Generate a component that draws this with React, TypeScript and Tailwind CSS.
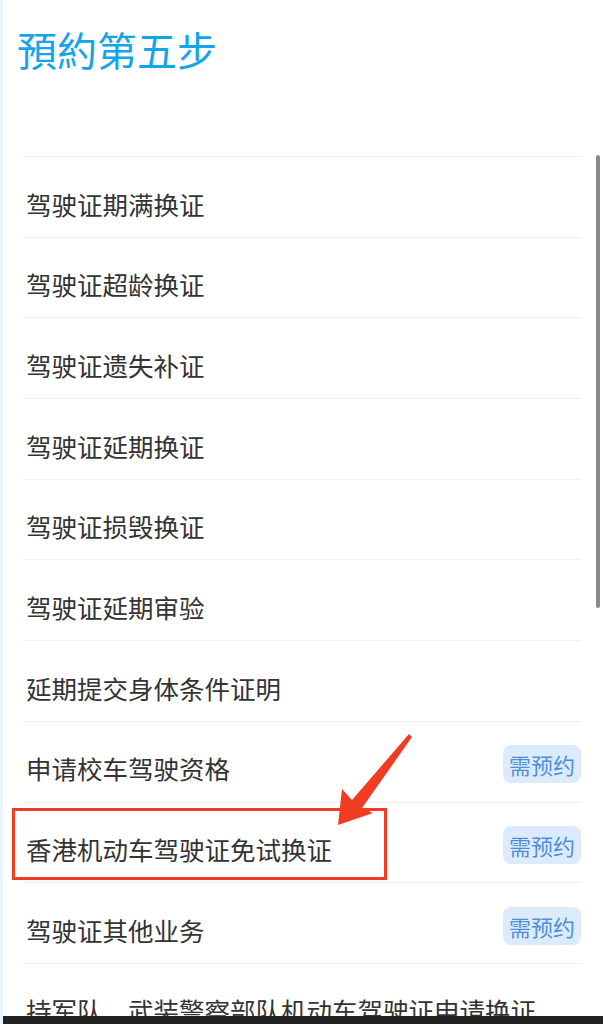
import React from "react";

const items: { label: string; booking?: boolean }[] = [
  { label: "驾驶证期满换证" },
  { label: "驾驶证超龄换证" },
  { label: "驾驶证遗失补证" },
  { label: "驾驶证延期换证" },
  { label: "驾驶证损毁换证" },
  { label: "驾驶证延期审验" },
  { label: "延期提交身体条件证明" },
  { label: "申请校车驾驶资格", booking: true },
  { label: "香港机动车驾驶证免试换证", booking: true },
  { label: "驾驶证其他业务", booking: true },
];

const Row = ({ label, booking }: { label: string; booking?: boolean }) => (
  <div className="flex h-[80.7px] items-center justify-between border-t border-[#eeeeee] pt-[13px]">
    <span className="pl-[3px] text-[25.5px] leading-none text-[#333333]">{label}</span>
    {booking && (
      <span className="mb-2 flex h-[38px] w-[78px] items-center justify-center rounded-lg bg-[#dcebfb] text-[22px] leading-none text-[#4f8fd8]">
        需预约
      </span>
    )}
  </div>
);

const App = () => {
  return (
    <div
      className="relative flex h-[1024px] w-[603px] overflow-hidden bg-white"
      style={{ fontFamily: '"Noto Sans CJK SC", "Noto Sans CJK TC", sans-serif' }}
    >
      <div className="w-[3px] shrink-0 bg-[#eaf2fb]" />
      <div className="flex flex-1 flex-col">
        <div className="h-[156px] shrink-0 pl-[14px] pt-[29px]">
          <h1 className="text-[40px] leading-none text-[#14a4e8]">預約第五步</h1>
        </div>
        <div className="ml-[20px] w-[558px]">
          {items.map((item, index) => (
            <Row key={index} label={item.label} booking={item.booking} />
          ))}
          <div className="h-[53px] overflow-hidden">
            <Row label="持军队、武装警察部队机动车驾驶证申请换证" />
          </div>
        </div>
        <div className="mt-auto h-[8px] bg-[#222222]" />
      </div>

      {/* scrollbar */}
      <div className="absolute left-[596px] top-[155px] h-[453px] w-[4px] rounded-sm bg-[#8a8a8a]" />

      {/* annotation box + arrow */}
      <div className="absolute left-[12px] top-[808px] h-[72px] w-[375px] border-[3px] border-[#f23c22]" />
      <svg className="absolute left-0 top-0" width="603" height="1024" viewBox="0 0 603 1024">
        <polygon
          points="409,734 412,737 362,808 373,813 338,825 342,789 352,800"
          fill="#f23c22"
        />
      </svg>
    </div>
  );
};

export default App;
